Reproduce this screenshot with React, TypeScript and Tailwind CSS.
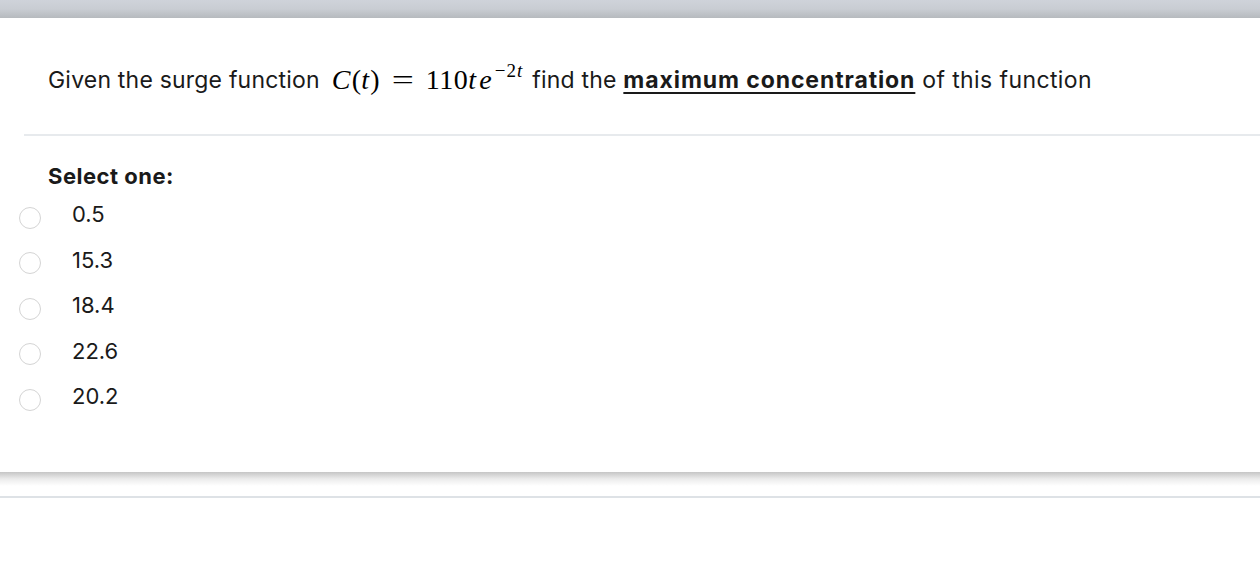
import React from "react";

const options = ["0.5", "15.3", "18.4", "22.6", "20.2"];

export default function App() {
  return (
    <div className="w-[1260px] h-[570px] bg-white overflow-hidden" style={{ fontFamily: "Inter, 'Noto Sans', sans-serif" }}>
      <div className="h-[18px] bg-gradient-to-b from-[#cfd3da] via-[#c9cdd3] to-[#b6babe]" />
      <div className="h-[454px] bg-white flex flex-col">
        <div className="h-[116px] pl-12 pt-[8px] flex items-center text-[23px] tracking-[0.2px] text-[#1a1a1a] whitespace-nowrap">
          <span>Given the surge function</span>
          <span className="ml-[12px] text-[28px] text-black flex items-baseline" style={{ fontFamily: "'Liberation Serif', serif" }}>
            <i>C</i>
            <span className="ml-[1px]">(</span>
            <i>t</i>
            <span className="ml-[1px]">)</span>
            <span className="mx-[15px] inline-block scale-x-140">=</span>
            <span className="tracking-[0.5px]">110</span>
            <i className="mr-[3px]">t</i>
            <i className="mr-[2px]">e</i>
            <span className="relative -top-[12px] text-[19px] tracking-[1px] ml-[1px]">
              −2<i>t</i>
            </span>
          </span>
          <span className="ml-[9px]">find the&nbsp;</span>
          <b className="underline underline-offset-[4px] decoration-[2px] tracking-[0.9px]">maximum concentration</b>
          <span className="tracking-[0.4px]">&nbsp;of this function</span>
        </div>
        <div className="ml-6 h-[2px] bg-[#e7eaed]" />
        <div className="pl-12 pt-[28px] text-[22px] tracking-[0.5px] font-bold text-[#1a1a1a] leading-[24px]">Select one:</div>
        <div className="flex flex-col pt-[4px]">
          {options.map((o) => (
            <div key={o} className="h-[45.5px] flex items-center">
              <div className="ml-[19px] mt-[6px] w-[22px] h-[22px] rounded-full border-[1.5px] border-[#d4d4d4] bg-white" />
              <span className="ml-[31px] text-[22px] text-[#1a1a1a]">{o}</span>
            </div>
          ))}
        </div>
      </div>
      <div className="h-[14px] bg-gradient-to-b from-[#c6c6c6] via-[#ececec] to-white" />
      <div className="h-[10px]" />
      <div className="h-[2px] bg-[#dee2e6]" />
    </div>
  );
}
